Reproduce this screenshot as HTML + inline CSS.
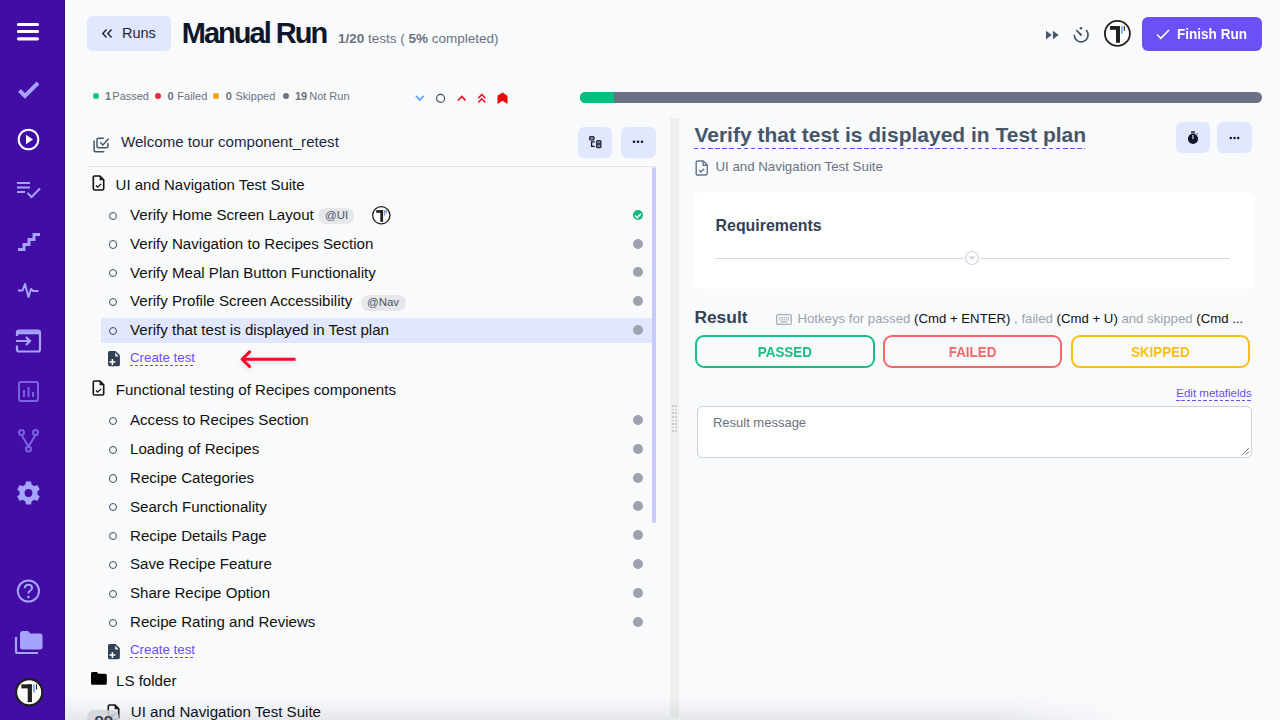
<!DOCTYPE html>
<html><head><meta charset="utf-8">
<style>
*{box-sizing:border-box;margin:0;padding:0}
html,body{width:1280px;height:720px;overflow:hidden;background:#F8FAFC;font-family:"Liberation Sans",sans-serif;color:#111827}
.a{position:absolute}
svg.a{overflow:visible}
.t{position:absolute;white-space:nowrap;line-height:1}
.sx{transform-origin:0 0}
</style></head><body>
<div class="a" style="left:0px;top:0px;width:65px;height:720px;background:#410DA5"></div>
<div class="a" style="left:64px;top:0px;width:1px;height:720px;background:#3A0A98"></div>
<svg class="a" style="left:16px;top:22px;" width="24" height="20" viewBox="0 0 24 20"><g stroke="#fff" stroke-width="3.2" stroke-linecap="round"><path d="M2.5 2.5H21.5M2.5 9.5H21.5M2.5 16.8H21.5"/></g></svg>
<svg class="a" style="left:17px;top:80px;" width="24" height="20" viewBox="0 0 24 20"><path d="M2.5 10.5L8 16L21 3" fill="none" stroke="#A5A3FB" stroke-width="4"/></svg>
<svg class="a" style="left:17px;top:128px;" width="24" height="24" viewBox="0 0 24 24"><circle cx="11.5" cy="11.5" r="9.8" fill="none" stroke="#fff" stroke-width="2"/><path d="M9 6.8V16.2L16 11.5Z" fill="#fff"/></svg>
<svg class="a" style="left:16px;top:181px;" width="26" height="18" viewBox="0 0 26 18"><g stroke="#A5A3FB" stroke-width="2" fill="none"><path d="M1 2H14M1 6.5H14M1 11H9"/><path d="M11.5 12L15.5 16L24 7.5"/></g></svg>
<svg class="a" style="left:17px;top:231px;" width="24" height="20" viewBox="0 0 24 20"><path d="M1 18.5H7V13.5H12V8.5H17V3.5H23" fill="none" stroke="#A5A3FB" stroke-width="3"/></svg>
<svg class="a" style="left:17px;top:281px;" width="23" height="18" viewBox="0 0 23 18"><path d="M1 9.5H5.5L8 3L11.5 16L14 8L16 10H21.5" fill="none" stroke="#A5A3FB" stroke-width="2" stroke-linejoin="round"/></svg>
<svg class="a" style="left:15px;top:329px;" width="27" height="25" viewBox="0 0 27 25"><g fill="none" stroke="#A5A3FB" stroke-width="2.2"><path d="M2 7V3.5Q2 1.5 4 1.5H23Q25 1.5 25 3.5V20.5Q25 22.5 23 22.5H4Q2 22.5 2 20.5V16.5"/><path d="M2 3.8H25" stroke-width="3"/><path d="M1 12H15M11 8L15 12L11 16"/></g></svg>
<svg class="a" style="left:18px;top:381px;" width="21" height="21" viewBox="0 0 21 21"><g fill="none" stroke="#7A63E3" stroke-width="2"><rect x="1" y="1" width="19" height="19" rx="2"/><path d="M6 16V9M10.5 16V6M15 16V11"/></g></svg>
<svg class="a" style="left:18px;top:429px;" width="21" height="24" viewBox="0 0 21 24"><g fill="none" stroke="#7A63E3" stroke-width="2"><circle cx="3.5" cy="3.5" r="2.5"/><circle cx="17.5" cy="3.5" r="2.5"/><circle cx="10.5" cy="20" r="2.5"/><path d="M3.5 6L10.5 17.5L17.5 6"/></g></svg>
<svg class="a" style="left:17px;top:480.7px;" width="23" height="24" viewBox="0 0 23 24"><g fill="#A5A3FB"><path d="M9 0.5H14L14.6 3.6L17.3 5.2L20.3 4.1L22.8 8.4L20.4 10.4V13.6L22.8 15.6L20.3 19.9L17.3 18.8L14.6 20.4L14 23.5H9L8.4 20.4L5.7 18.8L2.7 19.9L0.2 15.6L2.6 13.6V10.4L0.2 8.4L2.7 4.1L5.7 5.2L8.4 3.6Z"/></g><circle cx="11.5" cy="12" r="3.9" fill="#410DA5"/></svg>
<svg class="a" style="left:16px;top:579px;" width="25" height="25" viewBox="0 0 25 25"><circle cx="12.4" cy="12" r="10.6" fill="none" stroke="#A5A3FB" stroke-width="2"/><path d="M8.8 9.3Q8.8 5.8 12.4 5.8Q16 5.8 16 9Q16 11 13.6 12.1Q12.4 12.8 12.4 14.5" fill="none" stroke="#A5A3FB" stroke-width="2"/><circle cx="12.4" cy="18" r="1.3" fill="#A5A3FB"/></svg>
<svg class="a" style="left:14px;top:630px;" width="29" height="25" viewBox="0 0 29 25"><path d="M6 4Q6 1 8.5 1H14L16.5 3.5H26Q28.5 3.5 28.5 6V17Q28.5 19.5 26 19.5H8.5Q6 19.5 6 17Z" fill="#A5A3FB"/><path d="M2 7V21.5Q2 23 3.5 23H24" fill="none" stroke="#A5A3FB" stroke-width="2.2"/></svg>
<svg class="a" style="left:13.7px;top:676.8px;" width="30.4" height="30.4" viewBox="0 0 30.4 30.4"><circle cx="15.2" cy="15.2" r="13.1" fill="#fff" stroke="#1f1f1f" stroke-width="2.2"/><g transform="translate(15.2,15.2) scale(1.0597014925373134)"><rect x="-7.4" y="-7.4" width="9.8" height="3.8" fill="#202020"/><rect x="-1.4" y="-7.4" width="4" height="16.8" fill="#202020"/><rect x="3.85" y="-7.4" width="1.3" height="7.8" fill="#5B8CFF"/><rect x="6.35" y="-7.4" width="1.1" height="4.8" fill="#202020"/></g></svg>
<div class="a" style="left:87px;top:16px;width:84px;height:35px;background:#E0E7FF;border-radius:6px"></div>
<svg class="a" style="left:101px;top:28px;" width="12" height="11" viewBox="0 0 12 11"><path d="M5.5 1.5L1.8 5.5L5.5 9.5M10.5 1.5L6.8 5.5L10.5 9.5" fill="none" stroke="#1E293B" stroke-width="1.5"/></svg>
<div class="t " style="left:122px;top:25.83px;font-size:14.5px;color:#1E293B">Runs</div>
<div class="t " style="left:181.8px;top:19.05px;font-size:29px;font-weight:bold;color:#0F172A;letter-spacing:-2px">Manual Run</div>
<div class="t " style="left:338px;top:31.77px;font-size:13.5px;color:#6B7280"><b>1/20</b> tests ( <b>5%</b> completed)</div>
<svg class="a" style="left:1046px;top:30px;" width="14" height="10" viewBox="0 0 14 10"><path d="M0 0.8V9.2L5.8 5Z M6.9 0.8V9.2L12.7 5Z" fill="#475569"/></svg>
<svg class="a" style="left:1072px;top:26px;" width="18" height="18" viewBox="0 0 18 18"><path d="M2.3 9.4A6.9 6.9 0 1 0 14.3 4.3" fill="none" stroke="#475569" stroke-width="1.6" stroke-linecap="round"/><path d="M3.6 4.6L4.6 3.6L10 8.3Q10.4 9.9 8.6 10.1Z" fill="#475569"/><circle cx="9" cy="2.3" r="1.3" fill="#475569"/></svg>
<svg class="a" style="left:1103.0px;top:19.0px;" width="28.8" height="28.8" viewBox="0 0 28.8 28.8"><circle cx="14.4" cy="14.4" r="12.5" fill="#fff" stroke="#1f1f1f" stroke-width="1.8"/><g transform="translate(14.4,14.4) scale(1.0)"><rect x="-7.4" y="-7.4" width="9.8" height="3.8" fill="#202020"/><rect x="-1.4" y="-7.4" width="4" height="16.8" fill="#202020"/><rect x="3.85" y="-7.4" width="1.3" height="7.8" fill="#5B8CFF"/><rect x="6.35" y="-7.4" width="1.1" height="4.8" fill="#202020"/></g></svg>
<div class="a" style="left:1142px;top:17px;width:120px;height:34px;background:#6D4FF6;border-radius:6px"></div>
<svg class="a" style="left:1156px;top:29px;" width="14" height="11" viewBox="0 0 14 11"><path d="M1 5.5L4.8 9.3L13 1" fill="none" stroke="#fff" stroke-width="1.6"/></svg>
<div class="t " style="left:1176.8px;top:27.37px;font-size:14.8px;font-weight:bold;color:#fff"><span class="sx" style="display:inline-block;transform:scaleX(0.915)">Finish Run</span></div>
<div class="a" style="left:93px;top:93.4px;width:6px;height:6px;background:#10C47F;border-radius:50%"></div>
<div class="t " style="left:105px;top:90.59px;font-size:11px;color:#6B7280"><b>1</b></div>
<div class="t " style="left:112.3px;top:90.59px;font-size:11px;color:#6B7280">Passed</div>
<div class="a" style="left:154.8px;top:93.4px;width:6px;height:6px;background:#F0243A;border-radius:50%"></div>
<div class="t " style="left:167.5px;top:90.59px;font-size:11px;color:#6B7280"><b>0</b></div>
<div class="t " style="left:177.3px;top:90.59px;font-size:11px;color:#6B7280">Failed</div>
<div class="a" style="left:212.8px;top:93.4px;width:6px;height:6px;background:#FF9F0A;border-radius:50%"></div>
<div class="t " style="left:225.7px;top:90.59px;font-size:11px;color:#6B7280"><b>0</b></div>
<div class="t " style="left:235.5px;top:90.59px;font-size:11px;color:#6B7280">Skipped</div>
<div class="a" style="left:282.8px;top:93.4px;width:6px;height:6px;background:#6B7280;border-radius:50%"></div>
<div class="t " style="left:295px;top:90.59px;font-size:11px;color:#6B7280"><b>19</b></div>
<div class="t " style="left:309.2px;top:90.59px;font-size:11px;color:#6B7280">Not Run</div>
<svg class="a" style="left:415px;top:95px;" width="10" height="7" viewBox="0 0 10 7"><path d="M1 1L4.8 5L8.6 1" fill="none" stroke="#4F9BFF" stroke-width="1.6"/></svg>
<svg class="a" style="left:435px;top:93px;" width="11" height="11" viewBox="0 0 11 11"><circle cx="5.6" cy="5.4" r="4" fill="none" stroke="#374151" stroke-width="1.1"/></svg>
<svg class="a" style="left:457px;top:95px;" width="10" height="7" viewBox="0 0 10 7"><path d="M1 5.5L4.8 1.5L8.6 5.5" fill="none" stroke="#E8141E" stroke-width="1.8"/></svg>
<svg class="a" style="left:477px;top:93px;" width="11" height="11" viewBox="0 0 11 11"><path d="M1.3 5.2L4.8 1.5L8.3 5.2M1.3 9.5L4.8 5.8L8.3 9.5" fill="none" stroke="#E8141E" stroke-width="1.6"/></svg>
<svg class="a" style="left:497px;top:92px;" width="12" height="13" viewBox="0 0 12 13"><path d="M0.5 3.8L5.5 0.5L10.5 3.8V12L5.5 8.8L0.5 12Z" fill="#E80A0A"/></svg>
<div class="a" style="left:580px;top:92px;width:682px;height:11px;background:#6B7084;border-radius:6px;overflow:hidden"></div>
<div class="a" style="left:580px;top:92px;width:34px;height:11px;background:#00C07F;border-radius:6px 0 0 6px"></div>
<svg class="a" style="left:92px;top:135.5px;" width="17" height="17" viewBox="0 0 17 17"><g fill="none" stroke="#475569" stroke-width="1.5" stroke-linecap="round"><path d="M2.1 4.9V14.2Q2.1 15.7 3.6 15.7H11.8"/><path d="M11.4 2.2H6.5Q5 2.2 5 3.7V10.2Q5 11.7 6.5 11.7H14.4Q15.9 11.7 15.9 10.2V7.4"/><path d="M8.6 6.7L10.9 9L16.3 3.1"/></g></svg>
<div class="t " style="left:121px;top:133.72px;font-size:15.1px;color:#1E293B">Welcome tour component_retest</div>
<div class="a" style="left:578px;top:127px;width:34px;height:31px;background:#E0E7FF;border-radius:6px"></div>
<svg class="a" style="left:585px;top:132px;" width="20" height="20" viewBox="0 0 20 20"><g fill="#8A93A8" stroke="#1F2937" stroke-width="1.3"><rect x="4.6" y="4.6" width="4.4" height="3.2" rx="0.9"/><rect x="11.7" y="8.6" width="4.2" height="3.5" rx="0.9"/><rect x="11.7" y="12.1" width="4.2" height="3.5" rx="0.9"/></g><path d="M6.6 9.2V14.4H9.8M6.6 9.8H9.8" fill="none" stroke="#111827" stroke-width="1.3"/></svg>
<div class="a" style="left:621px;top:127px;width:35px;height:31px;background:#E0E7FF;border-radius:6px"></div>
<svg class="a" style="left:632px;top:140px;" width="12" height="4" viewBox="0 0 12 4"><g fill="#111827"><circle cx="2" cy="1.8" r="1.3"/><circle cx="6" cy="1.8" r="1.3"/><circle cx="10" cy="1.8" r="1.3"/></g></svg>
<div class="a" style="left:87px;top:166px;width:569px;height:1px;background:#E5E7EB"></div>
<div class="a" style="left:652px;top:167px;width:4px;height:356px;background:#C7CBFB;border-radius:2px"></div>
<svg class="a" style="left:92px;top:175px;" width="13" height="16" viewBox="0 0 13 16"><path d="M1.3 2.3Q1.3 1 2.6 1H8L11.7 4.7V13.7Q11.7 15 10.4 15H2.6Q1.3 15 1.3 13.7Z" fill="none" stroke="#111" stroke-width="1.6" stroke-linejoin="round"/><path d="M7.6 1V5.2H11.7Z" fill="#111"/><path d="M4 10.5L5.7 12.2L9 8.9" fill="none" stroke="#111" stroke-width="1.3"/></svg>
<div class="t " style="left:115.6px;top:177.30px;font-size:15px;color:#111">UI and Navigation Test Suite</div>
<div class="a" style="left:101px;top:318px;width:551px;height:25px;background:#E0E7FF"></div>
<div class="a" style="left:108.9px;top:211.70000000000002px;width:8.2px;height:8.2px;border:1.1px solid #3F4B5E;border-radius:50%"></div>
<div class="t " style="left:130px;top:207.22px;font-size:15.1px;color:#111">Verify Home Screen Layout</div>
<div class="a" style="left:633px;top:210px;width:10px;height:10px;background:#10B981;border-radius:50%"></div>
<svg class="a" style="left:634px;top:211.5px;" width="8" height="7" viewBox="0 0 8 7"><path d="M1 3.5L3.2 5.7L7 1.7" fill="none" stroke="#fff" stroke-width="1.5"/></svg>
<div class="a" style="left:108.9px;top:240.45000000000002px;width:8.2px;height:8.2px;border:1.1px solid #3F4B5E;border-radius:50%"></div>
<div class="t " style="left:130px;top:235.97px;font-size:15.1px;color:#111">Verify Navigation to Recipes Section</div>
<div class="a" style="left:633px;top:238.55px;width:10px;height:10px;background:#9CA3AF;border-radius:50%"></div>
<div class="a" style="left:108.9px;top:269.2px;width:8.2px;height:8.2px;border:1.1px solid #3F4B5E;border-radius:50%"></div>
<div class="t " style="left:130px;top:264.72px;font-size:15.1px;color:#111">Verify Meal Plan Button Functionality</div>
<div class="a" style="left:633px;top:267.3px;width:10px;height:10px;background:#9CA3AF;border-radius:50%"></div>
<div class="a" style="left:108.9px;top:297.95px;width:8.2px;height:8.2px;border:1.1px solid #3F4B5E;border-radius:50%"></div>
<div class="t " style="left:130px;top:293.47px;font-size:15.1px;color:#111">Verify Profile Screen Accessibility</div>
<div class="a" style="left:633px;top:296.05px;width:10px;height:10px;background:#9CA3AF;border-radius:50%"></div>
<div class="a" style="left:108.9px;top:326.7px;width:8.2px;height:8.2px;border:1.1px solid #3F4B5E;border-radius:50%"></div>
<div class="t " style="left:130px;top:322.22px;font-size:15.1px;color:#111">Verify that test is displayed in Test plan</div>
<div class="a" style="left:633px;top:324.8px;width:10px;height:10px;background:#9CA3AF;border-radius:50%"></div>
<div class="a" style="left:318px;top:208px;width:36px;height:16px;background:#E5E7EB;border-radius:8px"></div>
<div class="t " style="left:325px;top:210.27px;font-size:11.5px;color:#4B5563">@UI</div>
<div class="a" style="left:361px;top:295px;width:45px;height:16px;background:#E5E7EB;border-radius:8px"></div>
<div class="t " style="left:367px;top:297.27px;font-size:11.5px;color:#4B5563">@Nav</div>
<svg class="a" style="left:370.7px;top:204.7px;" width="20.6" height="20.6" viewBox="0 0 20.6 20.6"><circle cx="10.3" cy="10.3" r="8.65" fill="#fff" stroke="#1f1f1f" stroke-width="1.3"/><g transform="translate(10.3,10.3) scale(0.6940298507462687)"><rect x="-7.4" y="-7.4" width="9.8" height="3.8" fill="#202020"/><rect x="-1.4" y="-7.4" width="4" height="16.8" fill="#202020"/><rect x="3.85" y="-7.4" width="1.3" height="7.8" fill="#5B8CFF"/><rect x="6.35" y="-7.4" width="1.1" height="4.8" fill="#202020"/></g></svg>
<svg class="a" style="left:108px;top:351.3px;" width="13" height="16" viewBox="0 0 13 16"><path d="M0 1.6Q0 0 1.6 0H7.6L11.9 4.3V13.6Q11.9 15.2 10.3 15.2H1.6Q0 15.2 0 13.6Z" fill="#334155"/><path d="M7.2 1.6V5.4H10.6Z" fill="#F1F5F9"/><path d="M1.4 11H7.4M4.4 8V14" stroke="#fff" stroke-width="1.5"/></svg>
<div class="t " style="left:130px;top:350.74px;font-size:13.3px;color:#6C4DF9">Create test</div>
<div class="a" style="left:130px;top:365px;width:65px;height:1.2px;background:repeating-linear-gradient(90deg,#6C4DF9 0 3px,transparent 3px 5px)"></div>
<svg class="a" style="left:238px;top:349px;filter:drop-shadow(0 2px 2px rgba(0,0,0,0.12))" width="60" height="20" viewBox="0 0 60 20"><path d="M57.5 10.2H5.5" stroke="#FF0527" stroke-width="3"/><path d="M11.6 2.9L4.1 10.2L11.6 17.5" fill="none" stroke="#FF0527" stroke-width="3" stroke-linecap="round" stroke-linejoin="round"/></svg>
<svg class="a" style="left:92px;top:380px;" width="13" height="16" viewBox="0 0 13 16"><path d="M1.3 2.3Q1.3 1 2.6 1H8L11.7 4.7V13.7Q11.7 15 10.4 15H2.6Q1.3 15 1.3 13.7Z" fill="none" stroke="#111" stroke-width="1.6" stroke-linejoin="round"/><path d="M7.6 1V5.2H11.7Z" fill="#111"/><path d="M4 10.5L5.7 12.2L9 8.9" fill="none" stroke="#111" stroke-width="1.3"/></svg>
<div class="t " style="left:115.75px;top:382.22px;font-size:15.1px;color:#111">Functional testing of Recipes components</div>
<div class="a" style="left:108.9px;top:416.7px;width:8.2px;height:8.2px;border:1.1px solid #3F4B5E;border-radius:50%"></div>
<div class="t " style="left:130px;top:412.22px;font-size:15.1px;color:#111">Access to Recipes Section</div>
<div class="a" style="left:633px;top:414.8px;width:10px;height:10px;background:#9CA3AF;border-radius:50%"></div>
<div class="a" style="left:108.9px;top:445.55px;width:8.2px;height:8.2px;border:1.1px solid #3F4B5E;border-radius:50%"></div>
<div class="t " style="left:130px;top:441.07px;font-size:15.1px;color:#111">Loading of Recipes</div>
<div class="a" style="left:633px;top:443.65000000000003px;width:10px;height:10px;background:#9CA3AF;border-radius:50%"></div>
<div class="a" style="left:108.9px;top:474.4px;width:8.2px;height:8.2px;border:1.1px solid #3F4B5E;border-radius:50%"></div>
<div class="t " style="left:130px;top:469.92px;font-size:15.1px;color:#111">Recipe Categories</div>
<div class="a" style="left:633px;top:472.5px;width:10px;height:10px;background:#9CA3AF;border-radius:50%"></div>
<div class="a" style="left:108.9px;top:503.25px;width:8.2px;height:8.2px;border:1.1px solid #3F4B5E;border-radius:50%"></div>
<div class="t " style="left:130px;top:498.77px;font-size:15.1px;color:#111">Search Functionality</div>
<div class="a" style="left:633px;top:501.35px;width:10px;height:10px;background:#9CA3AF;border-radius:50%"></div>
<div class="a" style="left:108.9px;top:532.0999999999999px;width:8.2px;height:8.2px;border:1.1px solid #3F4B5E;border-radius:50%"></div>
<div class="t " style="left:130px;top:527.62px;font-size:15.1px;color:#111">Recipe Details Page</div>
<div class="a" style="left:633px;top:530.1999999999999px;width:10px;height:10px;background:#9CA3AF;border-radius:50%"></div>
<div class="a" style="left:108.9px;top:560.9499999999999px;width:8.2px;height:8.2px;border:1.1px solid #3F4B5E;border-radius:50%"></div>
<div class="t " style="left:130px;top:556.47px;font-size:15.1px;color:#111">Save Recipe Feature</div>
<div class="a" style="left:633px;top:559.05px;width:10px;height:10px;background:#9CA3AF;border-radius:50%"></div>
<div class="a" style="left:108.9px;top:589.8px;width:8.2px;height:8.2px;border:1.1px solid #3F4B5E;border-radius:50%"></div>
<div class="t " style="left:130px;top:585.32px;font-size:15.1px;color:#111">Share Recipe Option</div>
<div class="a" style="left:633px;top:587.9px;width:10px;height:10px;background:#9CA3AF;border-radius:50%"></div>
<div class="a" style="left:108.9px;top:618.65px;width:8.2px;height:8.2px;border:1.1px solid #3F4B5E;border-radius:50%"></div>
<div class="t " style="left:130px;top:614.17px;font-size:15.1px;color:#111">Recipe Rating and Reviews</div>
<div class="a" style="left:633px;top:616.75px;width:10px;height:10px;background:#9CA3AF;border-radius:50%"></div>
<svg class="a" style="left:108px;top:643.5px;" width="13" height="16" viewBox="0 0 13 16"><path d="M0 1.6Q0 0 1.6 0H7.6L11.9 4.3V13.6Q11.9 15.2 10.3 15.2H1.6Q0 15.2 0 13.6Z" fill="#334155"/><path d="M7.2 1.6V5.4H10.6Z" fill="#F1F5F9"/><path d="M1.4 11H7.4M4.4 8V14" stroke="#fff" stroke-width="1.5"/></svg>
<div class="t " style="left:130px;top:642.94px;font-size:13.3px;color:#6C4DF9">Create test</div>
<div class="a" style="left:130px;top:657.2px;width:65px;height:1.2px;background:repeating-linear-gradient(90deg,#6C4DF9 0 3px,transparent 3px 5px)"></div>
<svg class="a" style="left:91px;top:672px;" width="16" height="13" viewBox="0 0 16 13"><path d="M0 1.5Q0 0 1.5 0H5.8L7.6 1.8H14.3Q15.8 1.8 15.8 3.3V11.2Q15.8 12.7 14.3 12.7H1.5Q0 12.7 0 11.2Z" fill="#000"/></svg>
<div class="t " style="left:116px;top:673.02px;font-size:15.1px;color:#111">LS folder</div>
<svg class="a" style="left:107px;top:704px;" width="13" height="16" viewBox="0 0 13 16"><path d="M1.3 2.3Q1.3 1 2.6 1H8L11.7 4.7V13.7Q11.7 15 10.4 15H2.6Q1.3 15 1.3 13.7Z" fill="none" stroke="#111" stroke-width="1.6" stroke-linejoin="round"/><path d="M7.6 1V5.2H11.7Z" fill="#111"/><path d="M4 10.5L5.7 12.2L9 8.9" fill="none" stroke="#111" stroke-width="1.3"/></svg>
<div class="t " style="left:130.8px;top:704.42px;font-size:15.1px;color:#111">UI and Navigation Test Suite</div>
<div class="a" style="left:670px;top:118px;width:9px;height:599px;background:#EFEFEF"></div>
<div class="a" style="left:672.2px;top:405.2px;width:1.6px;height:1.6px;background:#C8C8C8"></div>
<div class="a" style="left:675.2px;top:405.2px;width:1.6px;height:1.6px;background:#C8C8C8"></div>
<div class="a" style="left:672.2px;top:408.8px;width:1.6px;height:1.6px;background:#C8C8C8"></div>
<div class="a" style="left:675.2px;top:408.8px;width:1.6px;height:1.6px;background:#C8C8C8"></div>
<div class="a" style="left:672.2px;top:412.4px;width:1.6px;height:1.6px;background:#C8C8C8"></div>
<div class="a" style="left:675.2px;top:412.4px;width:1.6px;height:1.6px;background:#C8C8C8"></div>
<div class="a" style="left:672.2px;top:416.0px;width:1.6px;height:1.6px;background:#C8C8C8"></div>
<div class="a" style="left:675.2px;top:416.0px;width:1.6px;height:1.6px;background:#C8C8C8"></div>
<div class="a" style="left:672.2px;top:419.59999999999997px;width:1.6px;height:1.6px;background:#C8C8C8"></div>
<div class="a" style="left:675.2px;top:419.59999999999997px;width:1.6px;height:1.6px;background:#C8C8C8"></div>
<div class="a" style="left:672.2px;top:423.2px;width:1.6px;height:1.6px;background:#C8C8C8"></div>
<div class="a" style="left:675.2px;top:423.2px;width:1.6px;height:1.6px;background:#C8C8C8"></div>
<div class="a" style="left:672.2px;top:426.8px;width:1.6px;height:1.6px;background:#C8C8C8"></div>
<div class="a" style="left:675.2px;top:426.8px;width:1.6px;height:1.6px;background:#C8C8C8"></div>
<div class="a" style="left:672.2px;top:430.4px;width:1.6px;height:1.6px;background:#C8C8C8"></div>
<div class="a" style="left:675.2px;top:430.4px;width:1.6px;height:1.6px;background:#C8C8C8"></div>
<div class="t " style="left:694.4px;top:124.22px;font-size:21px;font-weight:bold;color:#475569">Verify that test is displayed in Test plan</div>
<div class="a" style="left:694px;top:147.6px;width:391px;height:1.5px;background:repeating-linear-gradient(90deg,#6A4BFA 0 4.4px,transparent 4.4px 7.1px)"></div>
<div class="a" style="left:1176px;top:122px;width:34px;height:31px;background:#E0E7FF;border-radius:6px"></div>
<svg class="a" style="left:1183px;top:128px;" width="20" height="20" viewBox="0 0 20 20"><rect x="8" y="3" width="3.9" height="2.6" fill="#4B5563"/><path d="M13.6 6.2L14.6 5.6" stroke="#334155" stroke-width="1.2"/><circle cx="10" cy="10.8" r="5.1" fill="#0F172A"/><rect x="9" y="7" width="1.8" height="4.1" fill="#8E96AA"/></svg>
<div class="a" style="left:1217px;top:122px;width:35px;height:31px;background:#E0E7FF;border-radius:6px"></div>
<svg class="a" style="left:1228.5px;top:135.8px;" width="12" height="4" viewBox="0 0 12 4"><g fill="#111827"><circle cx="1.8" cy="2" r="1.25"/><circle cx="5.5" cy="2" r="1.25"/><circle cx="9.2" cy="2" r="1.25"/></g></svg>
<svg class="a" style="left:695px;top:159.5px;" width="14" height="16" viewBox="0 0 14 16"><path d="M1.2 2.4Q1.2 1 2.6 1H8.4L12.3 4.9V13.6Q12.3 15 10.9 15H2.6Q1.2 15 1.2 13.6Z" fill="none" stroke="#64748B" stroke-width="1.4" stroke-linejoin="round"/><path d="M8.2 1V5.2H12.3" fill="none" stroke="#64748B" stroke-width="1.4"/><path d="M4.2 10.3L5.9 12L9.2 8.7" fill="none" stroke="#64748B" stroke-width="1.3"/></svg>
<div class="t " style="left:715.4px;top:159.64px;font-size:13.3px;color:#6B7280">UI and Navigation Test Suite</div>
<div class="a" style="left:693px;top:192px;width:562px;height:97px;background:#fff;border-radius:8px"></div>
<div class="t " style="left:715.6px;top:218.04px;font-size:15.9px;font-weight:bold;color:#334155">Requirements</div>
<div class="a" style="left:715px;top:257.8px;width:249px;height:1px;background:#D4D8E2"></div>
<div class="a" style="left:980px;top:257.8px;width:250px;height:1px;background:#D4D8E2"></div>
<svg class="a" style="left:964px;top:250px;" width="16" height="16" viewBox="0 0 16 16"><circle cx="8" cy="8" r="6.5" fill="#fff" stroke="#D1D5DE" stroke-width="1.2"/><path d="M4.6 6.6H11.4L8 10Z" fill="#CDD2DC"/></svg>
<div class="t " style="left:694.4px;top:308.77px;font-size:17.4px;font-weight:bold;color:#334155">Result</div>
<svg class="a" style="left:776px;top:314px;" width="16" height="11" viewBox="0 0 16 11"><rect x="0.7" y="0.7" width="14.6" height="9.6" rx="1.3" fill="none" stroke="#A7AEBB" stroke-width="1.3"/><g fill="#A7AEBB"><rect x="3" y="3" width="1.5" height="1.3"/><rect x="5.3" y="3" width="1.5" height="1.3"/><rect x="7.6" y="3" width="1.5" height="1.3"/><rect x="9.9" y="3" width="1.5" height="1.3"/><rect x="12" y="3" width="1.2" height="1.3"/><rect x="3" y="5.2" width="1.5" height="1.3"/><rect x="5.3" y="5.2" width="1.5" height="1.3"/><rect x="7.6" y="5.2" width="1.5" height="1.3"/><rect x="9.9" y="5.2" width="1.5" height="1.3"/><rect x="12" y="5.2" width="1.2" height="1.3"/><rect x="4.5" y="7.4" width="7" height="1.2"/></g></svg>
<div class="t " style="left:797.5px;top:312.13px;font-size:13.2px;color:#111"><span style="color:#9CA3AF">Hotkeys for passed</span> (Cmd + ENTER) <span style="color:#9CA3AF">, failed</span> (Cmd + U) <span style="color:#9CA3AF">and skipped</span> (Cmd ...</div>
<div class="a" style="left:695px;top:335px;width:179.5px;height:32.6px;border:2px solid #17C081;border-radius:9px"></div>
<div class="t" style="left:695px;width:179.5px;text-align:center;top:345.92px;font-size:13.8px;font-weight:bold;color:#17C081"><span class="sx" style="display:inline-block;transform:scaleX(0.97);transform-origin:50% 0">PASSED</span></div>
<div class="a" style="left:882.5px;top:335px;width:179.5px;height:32.6px;border:2px solid #F66469;border-radius:9px"></div>
<div class="t" style="left:882.5px;width:179.5px;text-align:center;top:345.92px;font-size:13.8px;font-weight:bold;color:#F66469"><span class="sx" style="display:inline-block;transform:scaleX(0.97);transform-origin:50% 0">FAILED</span></div>
<div class="a" style="left:1070.5px;top:335px;width:179.5px;height:32.6px;border:2px solid #FDBD12;border-radius:9px"></div>
<div class="t" style="left:1070.5px;width:179.5px;text-align:center;top:345.92px;font-size:13.8px;font-weight:bold;color:#FDBD12"><span class="sx" style="display:inline-block;transform:scaleX(0.97);transform-origin:50% 0">SKIPPED</span></div>
<div class="t " style="left:1176.3px;top:387.77px;font-size:11.5px;color:#6C4DF9">Edit metafields</div>
<div class="a" style="left:1176.3px;top:400px;width:75px;height:1.3px;background:repeating-linear-gradient(90deg,#6C4DF9 0 3.5px,transparent 3.5px 5.5px)"></div>
<div class="a" style="left:697px;top:406px;width:554.5px;height:51.7px;background:#fff;border:1px solid #CBD2DC;border-radius:5px"></div>
<div class="t " style="left:712.9px;top:415.90px;font-size:13px;color:#6B7280">Result message</div>
<svg class="a" style="left:1241px;top:447px;" width="9" height="9" viewBox="0 0 9 9"><path d="M1 8L8 1M4.5 8L8 4.5" stroke="#777" stroke-width="1"/></svg>
<div class="a" style="left:65px;top:695px;width:1060px;height:25px;background:linear-gradient(180deg,rgba(15,23,42,0) 0%,rgba(15,23,42,0.03) 50%,rgba(15,23,42,0.08) 100%);-webkit-mask-image:linear-gradient(90deg,#000 88%,transparent 100%)"></div>
<div class="a" style="left:87px;top:710px;width:32px;height:30px;background:rgba(209,213,219,0.85);border-radius:7px"></div>
<div class="t " style="left:94.5px;top:711.10px;font-size:15px;color:#334155;font-weight:bold">oo</div>

</body></html>
